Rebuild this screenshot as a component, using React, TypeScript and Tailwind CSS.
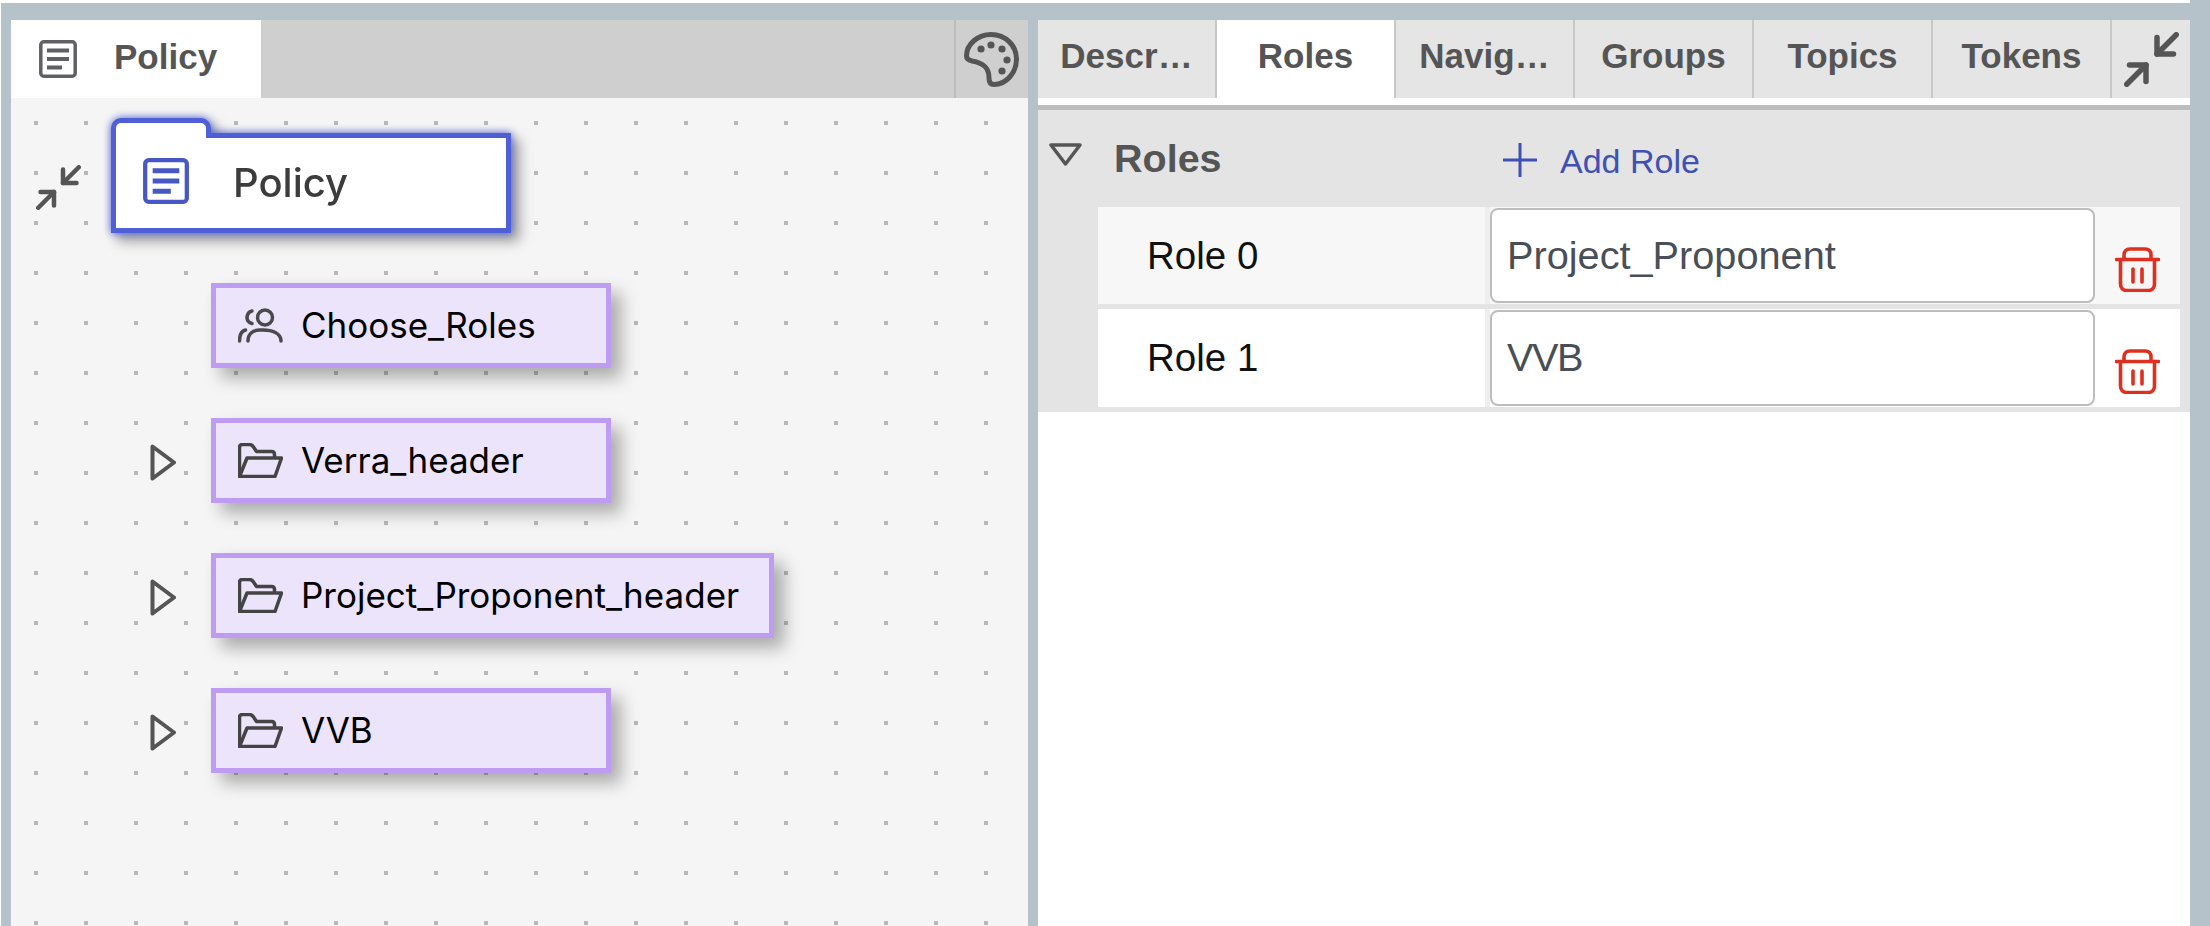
const tabs = [
  { label: 'Descr…', active: false },
  { label: 'Roles', active: true },
  { label: 'Navig…', active: false },
  { label: 'Groups', active: false },
  { label: 'Topics', active: false },
  { label: 'Tokens', active: false },
];

const nodes = [
  { label: 'Choose_Roles', icon: 'users', wide: false, toggle: false },
  { label: 'Verra_header', icon: 'folder', wide: false, toggle: true },
  { label: 'Project_Proponent_header', icon: 'folder', wide: true, toggle: true },
  { label: 'VVB', icon: 'folder', wide: false, toggle: true },
];

const roles = [
  { label: 'Role 0', value: 'Project_Proponent', rowBg: 'bg-[#f7f7f7]', height: 'h-[97px]', spacing: '' },
  { label: 'Role 1', value: 'VVB', rowBg: 'bg-white', height: 'h-[98px]', spacing: 'tracking-[-1.5px]' },
];

const DocIcon = ({ className, sw = 3.5 }: { className: string; sw?: number }) => (
  <svg viewBox="0 0 38 38" fill="none" stroke="currentColor" className={className}>
    <rect x="1.8" y="1.8" width="34.4" height="34.4" rx="3" strokeWidth={sw} />
    <path d="M8 10.5h22M8 19h22M8 27.5h15" strokeWidth="4" />
  </svg>
);

const Compress = ({ className }: { className: string }) => (
  <svg viewBox="2 2 20 20" fill="none" stroke="currentColor" strokeWidth="2" strokeLinecap="round" strokeLinejoin="round" className={className}>
    <path d="m14 10 7-7" />
    <path d="M20 10h-6V4" />
    <path d="m3 21 7-7" />
    <path d="M4 14h6v6" />
  </svg>
);

const Palette = () => (
  <svg viewBox="0 0 55 55" fill="none" className="w-[55px] h-[55px] text-[#555] -ml-[2px]">
    <path
      d="M8 29C4 28 2.500 26 2.500 24 2.500 12 14 2.500 27 2.500 42 2.500 52.500 14 52.500 27 52.500 41 42 52.500 30 52.500 26 52.500 25 49 25 46 25 36 20 31 8 29Z"
      stroke="currentColor"
      strokeWidth="5"
      strokeLinejoin="round"
    />
    <g fill="currentColor">
      <circle cx="17" cy="17" r="3.6" />
      <circle cx="27" cy="13" r="3.6" />
      <circle cx="38" cy="17" r="3.6" />
      <circle cx="43" cy="28" r="3.6" />
      <circle cx="38" cy="39" r="3.6" />
    </g>
  </svg>
);

const UsersIcon = () => (
  <svg viewBox="0 0 45 35" fill="none" stroke="currentColor" strokeWidth="3.5" strokeLinecap="round" className="w-[45px] h-[35px] text-[#4a4a4a]">
    <circle cx="27" cy="9.5" r="7.5" />
    <path d="M14 3C9 4 8 10 10 13c1 1.500 2 2 4 2.500" />
    <path d="M10 33c0-7 5-11 12-11h3c9 0 18 3 18 11" />
    <path d="M1.500 33c0-6 2-10 6-11" />
  </svg>
);

const FolderIcon = () => (
  <svg viewBox="0 0 45 35" fill="none" stroke="currentColor" strokeWidth="3.5" strokeLinejoin="round" className="w-[45px] h-[35px] text-[#444]">
    <path d="M1.500 33.500V4.500c0-2 1-3 3-3h7c2 0 3 1 4 2.500l3 4.500h15c2 0 3 1 3 3v3" />
    <path d="M1.500 33.500 9 15h34.500l-6.500 18.500Z" />
  </svg>
);

const Trash = () => (
  <svg viewBox="0 0 45 45" fill="none" stroke="currentColor" strokeWidth="3.6" strokeLinecap="round" className="w-[45px] h-[45px] text-[#de3020]">
    <path d="M1.500 12.500h42" />
    <path d="M9 12.500V8c0-3.500 2-6 6-6h15c4 0 6 2.500 6 6v4.500" />
    <path d="M5.500 12.500V37c0 4 2.500 6.500 6.500 6.500h21c4 0 6.500-2.500 6.500-6.500V12.500" />
    <path d="M18 22v13M27 22v13" />
  </svg>
);

export default function App() {
  return (
    <div className="w-[2210px] h-[926px] bg-[#b5c2ca] flex flex-col overflow-hidden font-['Liberation_Sans',sans-serif]">
      <div className="w-[2190px] h-[3px] bg-white shrink-0" />
      <div className="flex-1 min-h-0 flex pt-[17px] pr-[20px] pl-[10px] gap-[10px] border-l border-white">
        {/* left: policy tree */}
        <div className="w-[1017px] flex flex-col">
          <div className="h-[78px] bg-[#cfcfcf] flex shrink-0">
            <div className="w-[250px] bg-white flex items-center pl-[28px] text-[#5f6064]">
              <DocIcon className="w-[38px] h-[38px]" />
              <span className="ml-[37px] -mt-[4px] text-[35px] font-bold text-[#555]">Policy</span>
            </div>
            <div className="ml-auto w-[74px] border-l-2 border-[#bdbdbd] flex items-center justify-center">
              <Palette />
            </div>
          </div>
          <div className="flex-1 bg-[#f5f5f5] bg-[radial-gradient(#b8b8b8_2.2px,transparent_2.5px)] bg-[size:50px_50px] pt-[20px] pl-[25px]">
            <div className="flex items-start">
              <div className="mt-[47px] text-[#555]">
                <Compress className="w-[45px] h-[45px]" />
              </div>
              <div className="ml-[30px] w-[400px] flex flex-col [filter:drop-shadow(0_0_4px_#5060d8)_drop-shadow(7px_7px_6px_rgba(0,0,0,0.35))]">
                <div className="relative z-10 w-[100px] h-[20px] -mb-[5px] bg-white border-[5px] border-b-0 border-[#4f5fd8] rounded-t-[10px]" />
                <div className="h-[100px] bg-white border-[5px] border-[#4f5fd8] flex items-center pl-[27px] text-[#4758c4]">
                  <DocIcon className="w-[46px] h-[46px] -mt-[4px]" sw={3.5} />
                  <span className="ml-[44px] text-[40px] font-medium text-[#3c3c3c] font-['Inter',sans-serif]">Policy</span>
                </div>
              </div>
            </div>
            <div className="mt-[50px] pl-[114px] flex flex-col gap-[50px]">
              {nodes.map((n) => (
                <div key={n.label} className="flex items-center">
                  <div className="w-[61px] text-[#555]">
                    {n.toggle && (
                      <svg viewBox="0 0 26 37" fill="none" stroke="currentColor" strokeWidth="4" strokeLinejoin="round" className="w-[26px] h-[37px] mt-[4px]">
                        <path d="M2.500 2.500 24 18.500 2.500 34.500Z" />
                      </svg>
                    )}
                  </div>
                  <div
                    className={`h-[85px] ${n.wide ? 'w-[563px]' : 'w-[400px]'} bg-[#ece4fa] border-[5px] border-[#be9cf2] shadow-[10px_10px_16px_rgba(0,0,0,0.3)] flex items-center pl-[22px]`}
                  >
                    {n.icon === 'users' ? <UsersIcon /> : <FolderIcon />}
                    <span className="ml-[18px] text-[35px] text-black font-['Inter',sans-serif]">{n.label}</span>
                  </div>
                </div>
              ))}
            </div>
          </div>
        </div>

        {/* right: roles */}
        <div className="flex-1 bg-white flex flex-col">
          <div className="h-[78px] flex shrink-0 bg-[#e5e5e5]">
            {tabs.map((t) => (
              <div
                key={t.label}
                className={`w-[179px] flex items-center justify-center border-r-2 border-[#c8c8c8] pb-[5px] text-[35px] font-bold text-[#555] ${t.active ? 'bg-white' : ''}`}
              >
                {t.label}
              </div>
            ))}
            <div className="flex-1 flex items-center justify-center text-[#555]">
              <Compress className="w-[55px] h-[55px]" />
            </div>
          </div>
          <div className="h-[7px] bg-white shrink-0" />
          <div className="h-[5px] bg-[#bdbdbd] shrink-0" />
          <div className="bg-[#e4e4e4] pb-[5px] pr-[10px]">
            <div className="h-[97px] flex items-center pl-[11px] pb-[8px]">
              <svg viewBox="0 0 33 23" fill="none" stroke="currentColor" strokeWidth="3.500" strokeLinejoin="round" className="w-[33px] h-[23px] text-[#555]">
                <path d="M2 2h29L16.500 21Z" />
              </svg>
              <span className="ml-[32px] w-[389px] mt-[8px] text-[39.5px] font-bold text-[#555]">Roles</span>
              <svg viewBox="0 0 34 34" fill="none" stroke="currentColor" strokeWidth="3" className="w-[34px] h-[34px] text-[#3f51b5] mt-[10px]">
                <path d="M17 0v34M0 17h34" />
              </svg>
              <span className="ml-[23px] text-[34px] text-[#3f51b5] mt-[14px]">Add Role</span>
            </div>
            <div className="pl-[60px] flex flex-col gap-[5px]">
              {roles.map((r) => (
                <div key={r.label} className={`flex ${r.height} ${r.rowBg}`}>
                  <div className="w-[387px] flex items-center pl-[49px] text-[38.5px] text-[#111]">{r.label}</div>
                  <div className="w-[5px] bg-[#eeeeee]" />
                  <input
                    readOnly
                    value={r.value}
                    className={`w-[605px] my-[1px] bg-white border-2 border-[#bdbdbd] rounded-lg pl-[15px] text-[39.7px] text-[#4a4f57] outline-none ${r.spacing}`}
                  />
                  <div className="pl-[20px] pt-[40px]">
                    <Trash />
                  </div>
                </div>
              ))}
            </div>
          </div>
        </div>
      </div>
    </div>
  );
}
